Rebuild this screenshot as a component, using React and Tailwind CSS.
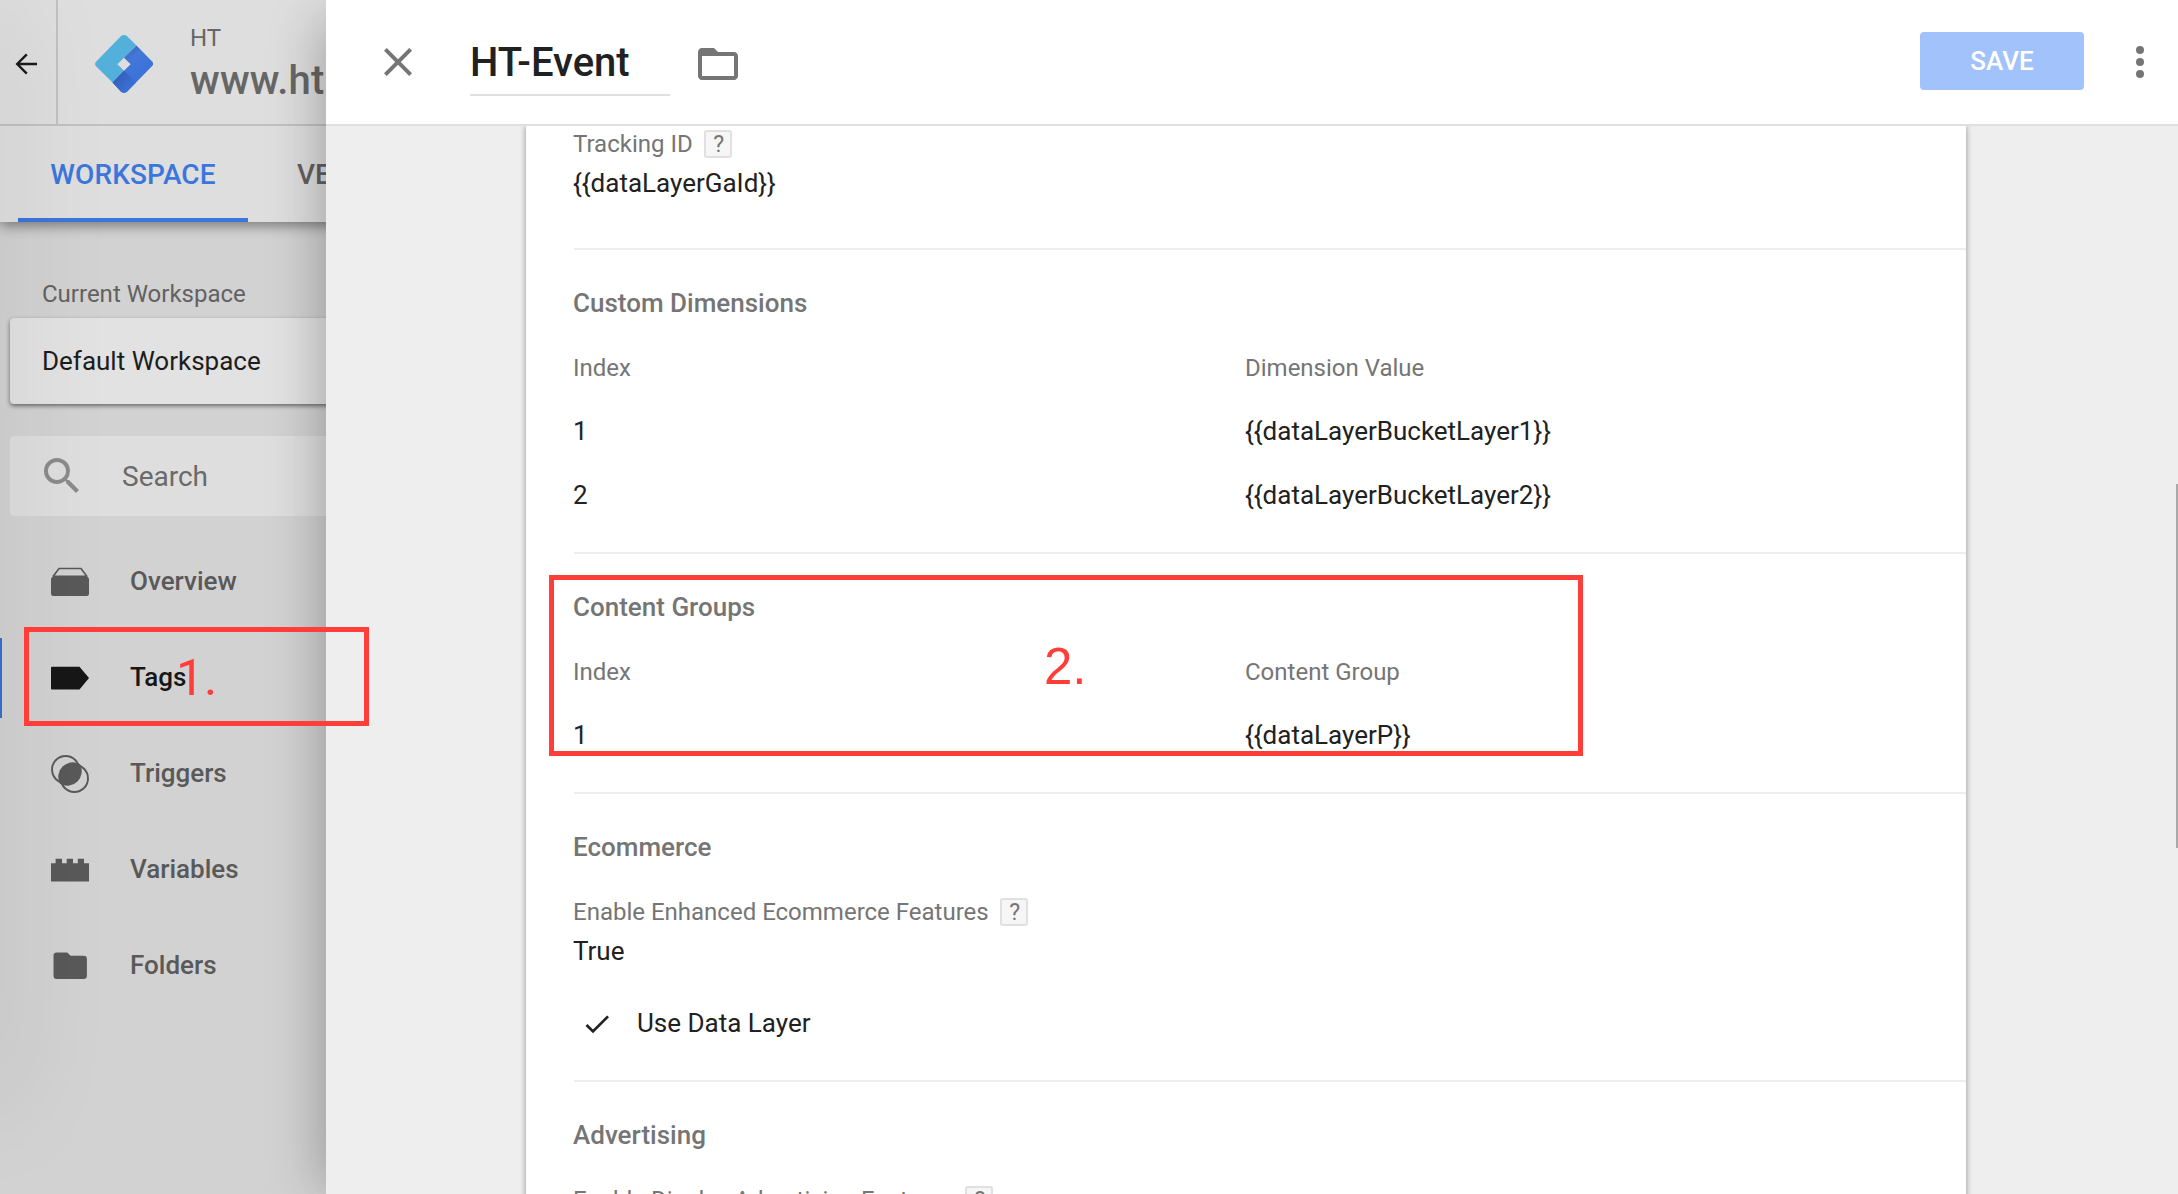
import React from "react";

const NAV = [
  { label: "Overview", icon: OverviewIcon },
  { label: "Tags", icon: TagIcon, active: true },
  { label: "Triggers", icon: TriggerIcon },
  { label: "Variables", icon: VariableIcon },
  { label: "Folders", icon: FolderIcon },
];

function OverviewIcon() {
  return (
    <svg className="h-[38px] w-[38px]" viewBox="0 0 38 38" fill="none">
      <path d="M2 13.5 8 5.5H30L36 13.5" stroke="currentColor" strokeWidth="1.7" />
      <path d="M2.5 12.5H35.5L38 15.5V30.5a2.5 2.5 0 0 1-2.5 2.5H2.5A2.5 2.5 0 0 1 0 30.5V15.5Z" fill="currentColor" />
    </svg>
  );
}

function TagIcon() {
  return (
    <svg className="h-[38px] w-[38px]" viewBox="0 0 38 38" fill="currentColor">
      <path d="M1 7.7H28.5L38 19 28.5 30.5H1a1 1 0 0 1-1-1V8.7a1 1 0 0 1 1-1Z" />
    </svg>
  );
}

function TriggerIcon() {
  return (
    <svg className="h-[38px] w-[38px]" viewBox="0 0 38 38" fill="none" stroke="currentColor" strokeWidth="1.9">
      <circle cx="14.6" cy="14.6" r="13.6" />
      <circle cx="23.4" cy="23.4" r="13.6" />
      <path d="M28.2 9.8A13.6 13.6 0 0 1 9.8 28.2 13.6 13.6 0 0 1 28.2 9.8Z" fill="currentColor" />
    </svg>
  );
}

function VariableIcon() {
  return (
    <svg className="h-[38px] w-[38px]" viewBox="0 0 38 38" fill="currentColor">
      <path d="M0 12.2H4.6V7.8H11V12.2H15.7V7.8H22V12.2H26.8V7.8H33V12.2H38V30.6H0Z" />
    </svg>
  );
}

function FolderIcon() {
  return (
    <svg className="h-10 w-[38px]" viewBox="0 0 38 40" fill="currentColor">
      <path d="M5.8 6.4H16.2L19.6 9.8H32.6A3.3 3.3 0 0 1 35.9 13.1V29.8A3.3 3.3 0 0 1 32.6 33.1H5.8A3.3 3.3 0 0 1 2.5 29.8V9.7A3.3 3.3 0 0 1 5.8 6.4Z" />
    </svg>
  );
}

function Logo() {
  return (
    <svg className="h-[58px] w-[58px]" viewBox="0 0 58 58">
      <defs>
        <linearGradient id="logo-fold" gradientUnits="userSpaceOnUse" x1="23" y1="41" x2="34" y2="52">
          <stop offset="0" stopColor="#355fb8" />
          <stop offset="1" stopColor="#3a70d3" />
        </linearGradient>
        <linearGradient id="logo-blue" gradientUnits="userSpaceOnUse" x1="34" y1="17" x2="49" y2="39">
          <stop offset="0" stopColor="#3f6cc8" />
          <stop offset="0.25" stopColor="#4378d9" />
          <stop offset="1" stopColor="#3b72d9" />
        </linearGradient>
      </defs>
      <path
        d="M25.8 1.3a4.6 4.6 0 0 1 6.4 0L41.5 10.6 29 22.8 22.4 29.2 29 35.8 17.5 47.5 1.3 31.4a3.4 3.4 0 0 1 0-4.9Z"
        fill="#52b0da"
      />
      <path
        d="M41.5 10.6 56.9 26.3a3.4 3.4 0 0 1 0 4.9L32.2 56.4a4.6 4.6 0 0 1-6.4 0L17.5 47.5 29 35.8 35.6 29.2 29 22.8Z"
        fill="url(#logo-blue)"
      />
      <path d="M29 35.8 17.5 47.5 25.8 56.4a4.6 4.6 0 0 0 6.4 0L41 47.5Z" fill="url(#logo-fold)" />
    </svg>
  );
}

function Help() {
  return (
    <span className="flex h-7 w-7 items-center justify-center rounded-[3px] border-2 border-[#e0e0e0] bg-[#f6f6f6] pt-px pl-[3px] text-[23px] leading-none text-[#757575]">
      ?
    </span>
  );
}

function Label({ children }) {
  return (
    <div className="flex h-10 items-center gap-[11px] text-2xl leading-10 text-[#757575]">
      <span className="whitespace-nowrap">{children}</span>
      <Help />
    </div>
  );
}

function Title({ children }) {
  return <h2 className="text-[26px] leading-8 font-medium text-[#757575]">{children}</h2>;
}

function IndexTable({ title, column, rows }) {
  return (
    <section className="border-b-2 border-[#eeeeee] pt-[37px] pb-[25px]">
      <Title>{title}</Title>
      <div className="mt-[17px] grid grid-cols-[672px_1fr] text-[26px] leading-[64px]">
        <div className="h-[63px] text-2xl leading-[64px] text-[#757575]">Index</div>
        <div className="h-[63px] text-2xl leading-[64px] text-[#757575]">{column}</div>
        {rows.map((value, i) => (
          <React.Fragment key={value}>
            <div>{i + 1}</div>
            <div>{value}</div>
          </React.Fragment>
        ))}
      </div>
    </section>
  );
}

function Sidebar() {
  return (
    <aside className="relative flex w-[326px] shrink-0 flex-col overflow-hidden bg-[#d2d2d2]">
      <div className="relative z-10 w-[600px] bg-[#dedede] shadow-[0_4px_12px_rgba(0,0,0,0.42)]">
        <div className="flex h-[126px] border-b-2 border-[#c1c1c1]">
          <div className="flex h-[126px] w-[58px] shrink-0 items-center border-r-2 border-[#c1c1c1] pl-[14px]">
            <svg className="h-6 w-6 text-[#1a1a1a]" viewBox="0 0 24 24" fill="none" stroke="currentColor" strokeWidth="2.4">
              <path d="M23 13H3.5M12.8 3.4 3.2 13 12.8 22.6" />
            </svg>
          </div>
          <div className="pt-[35px] pl-[37px]">
            <Logo />
          </div>
          <div className="pt-5 pl-[37px] text-[#666666]">
            <div className="text-2xl leading-9">HT</div>
            <div className="pt-px text-[40px] leading-[48px] font-medium tracking-[0.2px]">www.ht</div>
          </div>
        </div>
        <div className="flex h-24 pl-[18px] text-[28px] leading-[76px] font-medium">
          <div className="w-[230px] border-b-4 border-[#3b76dc] pt-[11px] text-center tracking-[0.1px] text-[#3b76dc]">
            WORKSPACE
          </div>
          <div className="pt-[11px] pl-[49px] text-[#616161]">VERSIONS</div>
        </div>
      </div>

      <div className="w-[600px] pt-[52px] pl-[10px]">
        <div className="pl-8 text-2xl leading-10 text-[#626262]">Current Workspace</div>
        <div className="mt-1 h-[86px] rounded bg-[#e2e2e2] pl-8 text-[26px] leading-[86px] text-[#1d1d1d] shadow-[0_2px_4px_rgba(0,0,0,0.5)]">
          Default Workspace
        </div>
        <div className="mt-8 flex h-20 items-center gap-9 rounded bg-[#dedede] pl-7 text-[28px] text-[#6a6a6a]">
          <svg className="h-12 w-12 text-[#8b8b8b]" viewBox="0 0 24 24" fill="currentColor">
            <path d="M15.5 14h-.79l-.28-.27A6.471 6.471 0 0 0 16 9.5 6.5 6.5 0 1 0 9.5 16c1.61 0 3.09-.59 4.23-1.57l.27.28v.79l5 4.99L20.49 19l-4.99-5zm-6 0C7.01 14 5 11.99 5 9.5S7.01 5 9.5 5 14 7.01 14 9.5 11.99 14 9.5 14z" />
          </svg>
          <span className="pt-0.5">Search</span>
        </div>
      </div>

      <nav className="flex flex-col gap-4 pt-[26px]">
        {NAV.map(({ label, icon: Icon, active }) => (
          <div
            key={label}
            className={
              active
                ? "flex h-20 items-center gap-[41px] border-l-2 border-[#3b6fd0] pl-[49px] text-[26px] font-medium text-[#171717]"
                : "flex h-20 items-center gap-[41px] border-l-2 border-transparent pl-[49px] text-[26px] font-medium text-[#595959]"
            }
          >
            <Icon />
            <span className="-mt-[3px] leading-[78px]">{label}</span>
          </div>
        ))}
      </nav>
      <div className="absolute top-0 -left-10 z-20 h-[1110px] w-10 shadow-[0_0_110px_rgba(0,0,0,0.13)]" />
    </aside>
  );
}

function DrawerHeader() {
  return (
    <header className="flex h-[126px] shrink-0 items-start border-b-2 border-[#e0e0e0] bg-white">
      <svg className="mt-[38px] ml-12 h-12 w-12 text-[#757575]" viewBox="0 0 24 24" fill="currentColor">
        <path d="M19 6.41 17.59 5 12 10.59 6.41 5 5 6.41 10.59 12 5 17.59 6.41 19 12 13.41 17.59 19 19 17.59 13.41 12z" />
      </svg>
      <div className="mt-8 ml-12 h-16 w-[200px] border-b-2 border-[#e0e0e0] text-[40px] leading-[62px] font-medium text-[#212121]">
        HT-Event
      </div>
      <svg className="mt-10 ml-6 h-12 w-12 text-[#757575]" viewBox="0 0 24 24" fill="currentColor">
        <path d="M20 6h-8l-2-2H4c-1.1 0-1.99.9-1.99 2L2 18c0 1.1.9 2 2 2h16c1.1 0 2-.9 2-2V8c0-1.1-.9-2-2-2zm0 12H4V8h16v10z" />
      </svg>
      <button className="mt-8 ml-auto h-[58px] w-[164px] rounded bg-[#a1c2fa] text-[26px] leading-[58px] font-medium text-white">
        SAVE
      </button>
      <svg className="mt-[38px] mr-[14px] ml-8 h-12 w-12 text-[#757575]" viewBox="0 0 24 24" fill="currentColor">
        <circle cx="12" cy="6" r="2" />
        <circle cx="12" cy="12" r="2" />
        <circle cx="12" cy="18" r="2" />
      </svg>
    </header>
  );
}

export default function App() {
  return (
    <div className="relative flex h-[1194px] w-[2178px] overflow-hidden bg-[#eeeeee] font-[Roboto,sans-serif] text-[#212121]">
      <Sidebar />
      <main className="relative z-10 flex flex-1 flex-col">
        <div className="absolute top-6 left-0 -z-10 h-[1160px] w-full shadow-[0_0_50px_4px_rgba(0,0,0,0.28)]" />
        <div className="relative flex h-full flex-col bg-[#eeeeee]">
          <DrawerHeader />
          <div className="relative flex-1 overflow-hidden">
            <div className="ml-[200px] h-[1100px] w-[1440px] bg-white pl-12 -indent-px shadow-[0_2px_6px_rgba(0,0,0,0.4)]">
              <section className="-mt-0.5 border-b-2 border-[#eeeeee] pb-[45px]">
                <Label>Tracking ID</Label>
                <div className="-mt-px text-[26px] leading-10">{"{{dataLayerGaId}}"}</div>
              </section>
              <IndexTable
                title="Custom Dimensions"
                column="Dimension Value"
                rows={["{{dataLayerBucketLayer1}}", "{{dataLayerBucketLayer2}}"]}
              />
              <IndexTable title="Content Groups" column="Content Group" rows={["{{dataLayerP}}"]} />
              <section className="border-b-2 border-[#eeeeee] pt-[37px] pb-[37px]">
                <Title>Ecommerce</Title>
                <div className="mt-[29px]">
                  <Label>Enable Enhanced Ecommerce Features</Label>
                </div>
                <div className="-mt-px text-[26px] leading-10">True</div>
                <div className="mt-8 flex h-10 items-center text-[26px] leading-10">
                  <svg className="mt-0.5 ml-[7px] h-8 w-8" viewBox="0 0 24 24" fill="currentColor">
                    <path d="M9 16.17 4.83 12l-1.42 1.41L9 19 21 7l-1.41-1.41z" />
                  </svg>
                  <span className="ml-[25px]">Use Data Layer</span>
                </div>
              </section>
              <section className="pt-[37px]">
                <Title>Advertising</Title>
                <div className="mt-[29px]">
                  <Label>Enable Display Advertising Features</Label>
                </div>
              </section>
            </div>
            <div className="absolute top-[358px] right-0 h-[364px] w-0.5 bg-[#a9a9a9]" />
          </div>
        </div>
      </main>

      {/* Numbered callouts */}
      <div className="absolute top-[627px] left-6 z-20 h-[99px] w-[345px] border-5 border-[#ff3e3a]" />
      <div className="absolute top-[650px] left-[176px] z-20 text-[50px] leading-[56px] text-[#ff3e3a]">1.</div>
      <div className="absolute top-[575px] left-[549px] z-20 h-[181px] w-[1034px] border-5 border-[#ff3e3a]" />
      <div className="absolute top-[639px] left-[1044px] z-20 font-['Liberation_Sans',sans-serif] text-[51px] leading-[56px] text-[#ff3e3a]">
        2.
      </div>
    </div>
  );
}
